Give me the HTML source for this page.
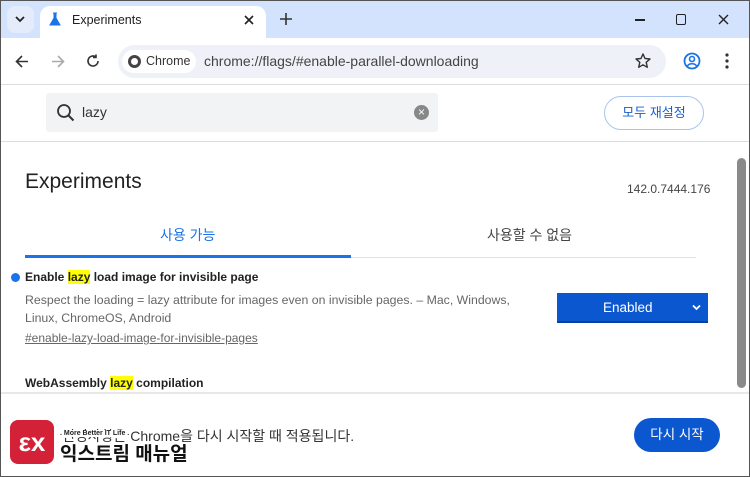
<!DOCTYPE html>
<html><head><meta charset="utf-8"><style>
*{margin:0;padding:0;box-sizing:border-box}
body{width:750px;height:477px;overflow:hidden;background:#fff;font-family:"Liberation Sans","Noto Sans CJK KR",sans-serif;position:relative;color:#202124}
.a{position:absolute}
</style></head><body>
<div class="a" style="left:0;top:0;width:750px;height:477px;border:1px solid #555;z-index:9;pointer-events:none"></div>
<div class="a" style="left:0;top:0;width:750px;height:39px;background:#d3e3fd"></div>
<div class="a" style="left:7px;top:6px;width:27px;height:27px;background:#e4ecfb;border-radius:8px"></div>
<svg class="a" style="left:14px;top:14px" width="12" height="10"><path d="M2 3l4 4 4-4" stroke="#222" stroke-width="1.8" fill="none"/></svg>
<div class="a" style="left:40px;top:6px;width:226px;height:34px;background:#fff;border-radius:10px 10px 0 0"></div>
<svg class="a" style="left:48px;top:12px" width="14" height="15"><path d="M5 1h4M6 1v5l-4 7h10l-4-7V1" fill="#1a73e8" stroke="#1a73e8"/></svg>
<div class="a" style="left:72px;top:13px;font-size:12.5px;color:#222">Experiments</div>
<svg class="a" style="left:244px;top:15px" width="10" height="10"><path d="M1 1l8 8M9 1l-8 8" stroke="#222" stroke-width="1.6"/></svg>
<svg class="a" style="left:280px;top:13px" width="12" height="12"><path d="M6 0v12M0 6h12" stroke="#333" stroke-width="1.6"/></svg>
<div class="a" style="left:635px;top:19px;width:10px;height:1.5px;background:#222"></div>
<div class="a" style="left:676px;top:14px;width:10px;height:11px;border:1.5px solid #222;border-radius:2px"></div>
<svg class="a" style="left:718px;top:14px" width="11" height="11"><path d="M1 1l9 9M10 1l-9 9" stroke="#222" stroke-width="1.4"/></svg>
<div class="a" style="left:0;top:38px;width:750px;height:46px;background:#fff"></div>
<svg class="a" style="left:15px;top:55px" width="14" height="13"><path d="M13 6.5H2M7 1L1.5 6.5 7 12" stroke="#333" stroke-width="1.6" fill="none"/></svg>
<svg class="a" style="left:51px;top:55px" width="14" height="13"><path d="M1 6.5h11M7 1l5.5 5.5L7 12" stroke="#aaa" stroke-width="1.6" fill="none"/></svg>
<svg class="a" style="left:86px;top:54px" width="14" height="14"><path d="M12 7a5 5 0 1 1-2-4M10 0.5v3h-3" stroke="#333" stroke-width="1.6" fill="none"/></svg>
<div class="a" style="left:118px;top:45px;width:548px;height:33px;background:#eef1f8;border-radius:17px"></div>
<div class="a" style="left:122px;top:50px;width:74px;height:23px;background:#fff;border-radius:12px"></div>
<div class="a" style="left:128px;top:55px;width:13px;height:13px;border-radius:50%;border:3px solid #444"></div>
<div class="a" style="left:146px;top:54px;font-size:12.5px;color:#333">Chrome</div>
<div class="a" style="left:204px;top:53px;font-size:14px;color:#444">chrome://flags/#enable-parallel-downloading</div>
<svg class="a" style="left:635px;top:53px" width="16" height="16"><path d="M8 1l2 4.5 5 .5-3.8 3.3 1.1 5L8 11.8 3.7 14.3l1.1-5L1 6l5-.5z" stroke="#333" stroke-width="1.4" fill="none" stroke-linejoin="round"/></svg>
<svg class="a" style="left:683px;top:52px" width="18" height="18"><circle cx="9" cy="9" r="7.5" stroke="#1a73e8" stroke-width="1.8" fill="none"/><circle cx="9" cy="7" r="2.5" stroke="#1a73e8" stroke-width="1.6" fill="none"/><path d="M4.5 14c1.5-3 7.5-3 9 0" stroke="#1a73e8" stroke-width="1.6" fill="none"/></svg>
<svg class="a" style="left:725px;top:53px" width="4" height="16"><circle cx="2" cy="2" r="1.6" fill="#333"/><circle cx="2" cy="8" r="1.6" fill="#333"/><circle cx="2" cy="14" r="1.6" fill="#333"/></svg>
<div class="a" style="left:0;top:84px;width:750px;height:1px;background:#ddd"></div>
<div class="a" style="left:46px;top:93px;width:392px;height:39px;background:#f1f3f4;border-radius:3px"></div>
<svg class="a" style="left:56px;top:103px" width="20" height="20"><circle cx="8" cy="8" r="6" stroke="#333" stroke-width="1.8" fill="none"/><path d="M12.5 12.5l5 5" stroke="#333" stroke-width="2"/></svg>
<div class="a" style="left:82px;top:104px;font-size:14px;color:#333">lazy</div>
<div class="a" style="left:414px;top:105px;width:15px;height:15px;border-radius:50%;background:#888;color:#fff;font-size:12px;text-align:center;line-height:15px">×</div>
<div class="a" style="left:604px;top:96px;width:100px;height:34px;border:1px solid #aac3ee;border-radius:17px;color:#1a5fc8;font-size:13px;text-align:center;line-height:32px">모두 재설정</div>
<div class="a" style="left:0;top:141px;width:750px;height:1px;background:#ddd"></div>
<div class="a" style="left:737px;top:158px;width:9px;height:230px;background:#8a8a8a;border-radius:5px"></div>
<div class="a" style="left:25px;top:170px;font-size:21px;color:#222">Experiments</div>
<div class="a" style="left:627px;top:182px;font-size:12px;color:#444">142.0.7444.176</div>
<div class="a" style="left:160px;top:225px;font-size:14px;color:#1a73e8">사용 가능</div>
<div class="a" style="left:487px;top:225px;font-size:14px;color:#444">사용할 수 없음</div>
<div class="a" style="left:25px;top:255px;width:326px;height:3px;background:#1a73e8"></div>
<div class="a" style="left:351px;top:257px;width:345px;height:1px;background:#e0e0e0"></div>
<div class="a" style="left:11px;top:273px;width:9px;height:9px;border-radius:50%;background:#1a73e8"></div>
<div class="a" style="left:25px;top:270px;font-size:12px;font-weight:bold;color:#222">Enable <span style="background:#ff0">lazy</span> load image for invisible page</div>
<div class="a" style="left:25px;top:291px;width:510px;font-size:12.3px;line-height:18px;color:#666">Respect the loading = lazy attribute for images even on invisible pages. – Mac, Windows, Linux, ChromeOS, Android</div>
<div class="a" style="left:25px;top:331px;font-size:12px;color:#666;text-decoration:underline">#enable-lazy-load-image-for-invisible-pages</div>
<div class="a" style="left:557px;top:293px;width:151px;height:30px;background:#0b57d0;border-bottom:2px solid #0842a0;color:#fff;font-size:13.5px;line-height:29px;padding-left:46px">Enabled</div>
<svg class="a" style="left:692px;top:304px" width="9" height="7"><path d="M1 1.5l3.5 3.5L8 1.5" stroke="#fff" stroke-width="1.8" fill="none"/></svg>
<div class="a" style="left:25px;top:376px;font-size:12px;font-weight:bold;color:#222">WebAssembly <span style="background:#ff0">lazy</span> compilation</div>
<div class="a" style="left:0;top:392px;width:750px;height:85px;background:#fff;border-top:2px solid #e8e8e8"></div>
<div class="a" style="left:62px;top:426px;font-size:14px;color:#333">변경사항은 Chrome을 다시 시작할 때 적용됩니다.</div>
<div class="a" style="left:10px;top:420px;width:44px;height:44px;background:#d32238;border-radius:8px;color:#fff;font-weight:bold;font-size:26px;text-align:center;line-height:44px">εx</div>
<div class="a" style="left:60px;top:430px;font-size:7px;font-weight:bold;color:#222;background:#fff">. More Better IT Life .</div>
<div class="a" style="left:60px;top:439px;font-size:19px;font-weight:bold;color:#111">익스트림 매뉴얼</div>
<div class="a" style="left:634px;top:418px;width:86px;height:34px;background:#0b57d0;border-radius:17px;color:#fff;font-size:13.5px;text-align:center;line-height:34px">다시 시작</div>
</body></html>
